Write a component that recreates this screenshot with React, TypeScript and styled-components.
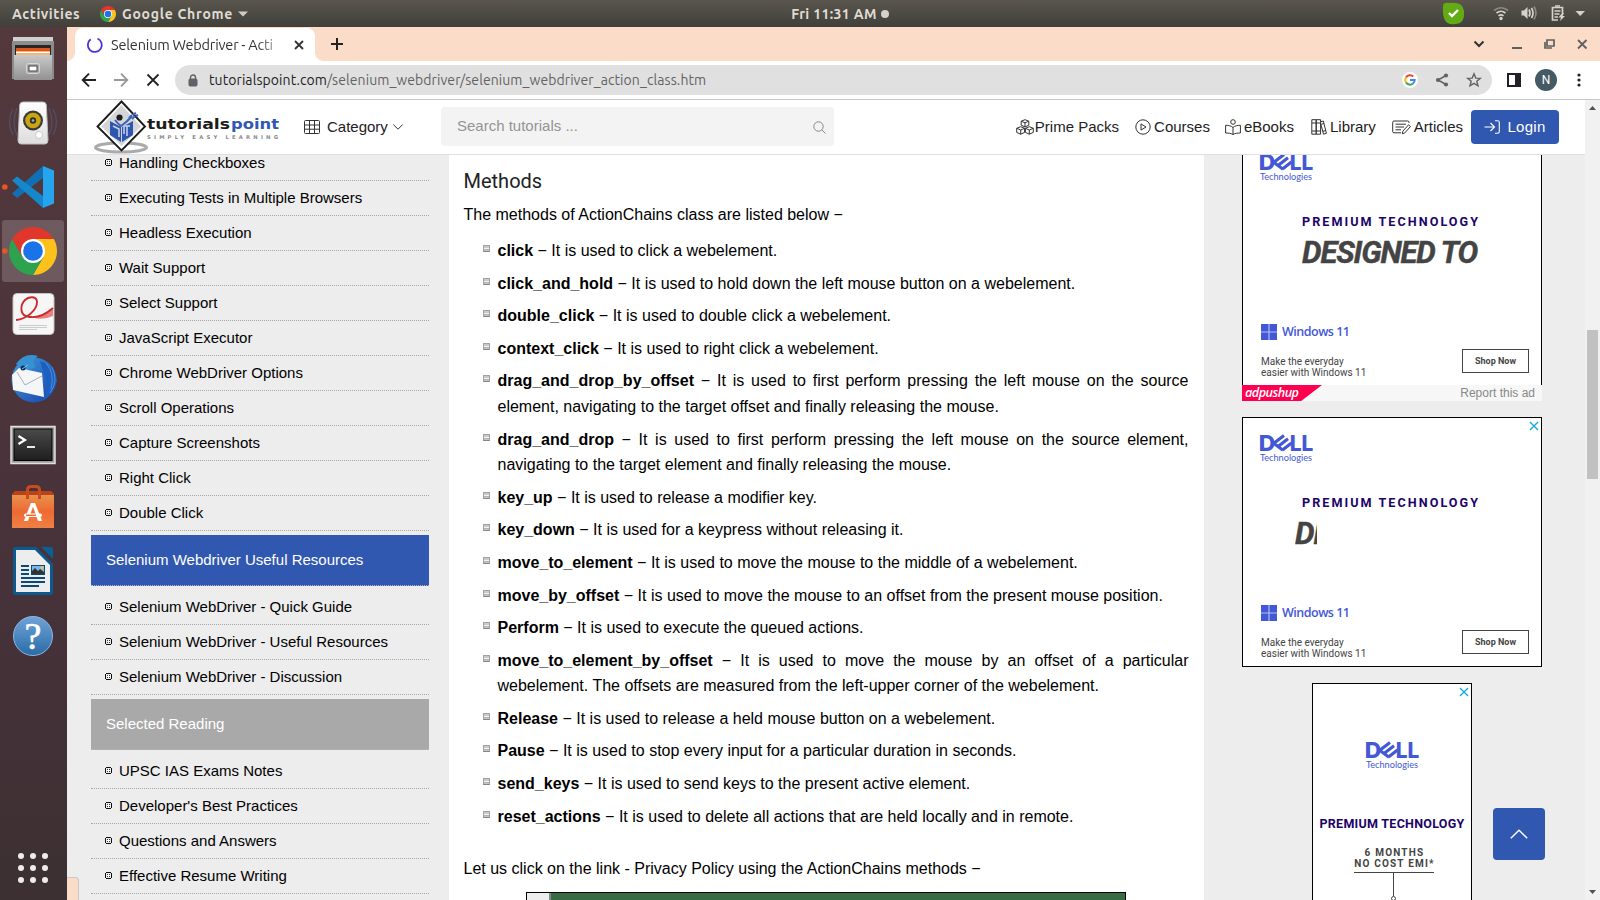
import React from 'react';
import styled, { createGlobalStyle, css } from 'styled-components';

const GlobalStyle = createGlobalStyle`
  *, *::before, *::after { box-sizing: border-box; }
  body { margin: 0; overflow: hidden; font-family: "Liberation Sans", Arial, sans-serif; color: #000; }
  svg { display: block; flex: none; overflow: visible; }
`;

const uiFont = '"Ubuntu", "Noto Sans", sans-serif';

const Desktop = styled.div`
  width: 1600px;
  height: 900px;
  display: flex;
  flex-direction: column;
  overflow: hidden;
`;

/* ---------- top bar ---------- */
const TopBar = styled.header`
  height: 27px;
  flex: none;
  display: grid;
  grid-template-columns: 1fr auto 1fr;
  align-items: center;
  background: linear-gradient(#5a564e, #403f3a);
  color: #dfdbd2;
  font: 600 14px/26px ${uiFont};
`;
const TopLeft = styled.div`
  display: flex;
  align-items: center;
  padding-left: 12px;
`;
const Activities = styled.span`
  width: 88px;
  letter-spacing: 0.6px;
`;
const AppName = styled.span`
  margin: 0 5px 0 6px;
  letter-spacing: 0.72px;
`;
const Clock = styled.div`
  display: flex;
  align-items: center;
  gap: 4px;
  padding-left: 80px;
  letter-spacing: 0.35px;
`;
const Dot = styled.i`
  width: 8px;
  height: 8px;
  border-radius: 50%;
  background: #d6d2ca;
`;
const Tray = styled.div`
  display: flex;
  justify-content: flex-end;
  align-items: center;
  padding-right: 13px;
`;

const Body = styled.div`
  flex: 1;
  display: flex;
  min-height: 0;
`;

/* ---------- dock ---------- */
const Dock = styled.nav`
  width: 67px;
  flex: none;
  display: flex;
  flex-direction: column;
  background: linear-gradient(#53393c, #4a333a 50%, #443138 75%, #3c3032);
`;
const Slot = styled.div<{ $active?: boolean }>`
  height: 64px;
  display: flex;
  ${p => p.$active && css`
    height: 62px;
    margin: 1px 3px 1px 2px;
    border-radius: 3px;
    background: rgba(255, 255, 255, 0.18);
    > svg { margin: -1px -3px -1px -2px; }
  `}
`;
const AppsGrid = styled.div`
  margin: auto 0 17px 18px;
  width: 30px;
  display: grid;
  grid-template-columns: repeat(3, 6px);
  gap: 6px;
  i { height: 6px; border-radius: 50%; background: #efecec; }
`;

/* ---------- browser ---------- */
const Browser = styled.div`
  flex: 1;
  min-width: 0;
  display: flex;
  flex-direction: column;
  position: relative;
  background: #fff;
`;
const TabStrip = styled.div`
  height: 34px;
  flex: none;
  display: flex;
  align-items: stretch;
  padding-left: 8px;
  background: #fbdcc8;
`;
const Tab = styled.div`
  width: 240px;
  margin-top: 1px;
  display: flex;
  align-items: center;
  padding: 0 10px 0 12px;
  border-radius: 8px 8px 0 0;
  background: #fff;
  position: relative;
  &::before, &::after {
    content: '';
    position: absolute;
    bottom: 0;
    width: 8px;
    height: 8px;
  }
  &::before { left: -8px; background: radial-gradient(circle at 0 0, transparent 7.5px, #fff 8px); }
  &::after { right: -8px; background: radial-gradient(circle at 100% 0, transparent 7.5px, #fff 8px); }
`;
const TabTitle = styled.span`
  width: 176px;
  margin: 0 7px 0 8px;
  white-space: nowrap;
  font: 14.5px/30px ${uiFont};
  letter-spacing: -0.18px;
  word-spacing: -0.3px;
  color: #333;
  mask-image: linear-gradient(90deg, #000 146px, transparent 178px);
`;
const StripButtons = styled.div`
  flex: 1;
  display: flex;
  align-items: center;
  justify-content: space-between;
  padding: 0 12px 0 15px;
`;
const WindowButtons = styled.div`
  display: flex;
  align-items: center;
`;
const Toolbar = styled.div`
  height: 39px;
  flex: none;
  display: flex;
  align-items: center;
  padding-left: 14px;
  border-bottom: 1px solid #c8c8c8;
  background: #fff;
`;
const NavButtons = styled.div`
  width: 94px;
  display: flex;
  gap: 16px;
`;
const Omnibox = styled.div`
  width: 1317px;
  height: 30px;
  border-radius: 15px;
  display: flex;
  align-items: center;
  padding: 0 10px 0 13px;
  background: #e0e0e0;
  font: 14px/28px ${uiFont};
  color: #636363;
`;
const Url = styled.span`
  flex: 1;
  margin-left: 11px;
  letter-spacing: 0.082px;
  b { font-weight: 400; color: #202124; }
`;
const OmniActions = styled.div`
  display: flex;
  align-items: center;
  gap: 16px;
`;
const PanelButton = styled.span`
  margin-left: 15px;
`;
const Avatar = styled.span`
  width: 22px;
  height: 22px;
  margin: 0 20px 0 14px;
  border-radius: 50%;
  background: #455a64;
  color: #fff;
  font: 12px/22px Roboto, sans-serif;
  text-align: center;
`;

/* ---------- page ---------- */
const Page = styled.div`
  flex: 1;
  min-height: 0;
  display: flex;
`;
const Site = styled.div`
  width: 1518px;
  display: flex;
  flex-direction: column;
  background: #ededed;
`;
const SiteHeader = styled.div`
  height: 55px;
  flex: none;
  display: flex;
  align-items: center;
  border-bottom: 1px solid #e0e0e0;
  background: #fff;
  font-size: 15px;
  line-height: 17px;
  color: #222;
`;
const LogoBox = styled.div`
  width: 237px;
  padding-left: 26px;
`;
const Label = styled.span`
  padding-bottom: 2px;
`;
const Category = styled.div`
  width: 137px;
  display: flex;
  align-items: center;
  ${Label} { margin: 0 5px 0 7px; }
`;
const Search = styled.div`
  width: 393px;
  height: 39px;
  margin-top: -1px;
  display: flex;
  align-items: center;
  justify-content: space-between;
  padding: 0 8px 0 16px;
  border-radius: 4px;
  background: #f3f3f3;
  color: #949494;
  svg { margin-top: 2px; }
`;
const Links = styled.div`
  flex: 1;
  display: flex;
  align-items: center;
  justify-content: flex-end;
  padding-right: 26px;
`;
const NavLink = styled.a<{ $gap: number; $after: number }>`
  display: flex;
  align-items: center;
  gap: ${p => p.$gap}px;
  margin-right: ${p => p.$after}px;
  white-space: nowrap;
`;
const Login = styled.a`
  width: 88px;
  height: 34px;
  display: flex;
  align-items: center;
  justify-content: center;
  gap: 7px;
  border-radius: 4px;
  background: #3158b1;
  color: #fff;
  letter-spacing: 0.3px;
`;
const Columns = styled.div`
  flex: 1;
  min-height: 0;
  display: flex;
  overflow: hidden;
`;
const Sidebar = styled.aside`
  width: 382px;
  flex: none;
  padding: 0 20px 0 24px;
`;
const Menu = styled.ul`
  list-style: none;
  margin: 0 0 4px;
  padding: 0;
`;
const SideMenu = styled.div`
  margin-top: -9px;
`;
const MenuItem = styled.li`
  height: 35px;
  display: flex;
  align-items: center;
  gap: 7px;
  padding: 0 0 2px 14px;
  border-bottom: 1px dotted #a8a8a8;
  font-size: 15px;
`;
const MenuHeading = styled.div<{ $bg: string }>`
  height: 51px;
  margin-bottom: 4px;
  padding-left: 15px;
  border-bottom: 1px dotted #b5b5b5;
  background: ${p => p.$bg};
  color: #fff;
  font-size: 15px;
  line-height: 50px;
`;
const MarkHolder = styled.i`
  padding-top: 1px;
`;
const Article = styled.main`
  width: 755px;
  flex: none;
  padding: 10px 15.5px 0 14.5px;
  background: #fff;
  font-size: 16px;
  line-height: 25.6px;
  text-align: justify;
`;
const Title = styled.h2`
  margin: 0;
  font: 400 20px/32px Roboto, sans-serif;
  color: #222;
`;
const Para = styled.p`
  margin: 5px 0 10.4px;
`;
const Methods = styled.ul`
  list-style: none;
  margin: 0 0 26.8px;
  padding: 0 0 0 34px;
`;
const Method = styled.li`
  margin-bottom: 7px;
  position: relative;
  &::before {
    content: '';
    position: absolute;
    left: -15px;
    top: 7px;
    width: 7px;
    height: 7px;
    border: 1px solid #a2a2a2;
    border-bottom-color: #858585;
    background: linear-gradient(#c9c9c9 2px, #f4f4f4 2px, #f4f4f4 3px, #a8a8a8 3px, #d0d0d0);
  }
`;
const Shot = styled.div`
  width: 600px;
  height: 60px;
  margin: 10.6px 0 0 62.5px;
  border: 1px solid #000;
  background: linear-gradient(90deg, #eee 22px, #888 22px, #888 24px, #376b43 24px);
`;
const AdColumn = styled.aside`
  flex: 1;
  display: flex;
  flex-direction: column;
  align-items: center;
`;
const AdGroup = styled.div`
  width: 300px;
  margin: -19px 5px 16px 0;
`;
const Ad = styled.div<{ $cut?: boolean }>`
  position: relative;
  width: 300px;
  height: ${p => (p.$cut ? 249 : 250)}px;
  margin-right: 5px;
  padding: 16px 12px 0 17px;
  border: 1px solid #000;
  ${p => p.$cut && 'border-bottom: 0;'}
  background: #fff;
  flex: none;
  font-family: Roboto, sans-serif;
`;
const CloseMark = styled.span`
  position: absolute;
  top: 2.5px;
  right: 2.5px;
`;
const AdTag = styled.div`
  margin: 29px 0 0 42px;
  font-size: 12.6px;
  font-weight: 700;
  line-height: 16px;
  letter-spacing: 2.05px;
  white-space: nowrap;
  color: #200368;
`;
const AdSlogan = styled.div<{ $w?: number; $x?: number }>`
  width: ${p => p.$w ?? 190}px;
  height: 36px;
  margin: 5px 0 0 ${p => p.$x ?? 42}px;
  overflow: hidden;
  white-space: nowrap;
  font-size: 31px;
  line-height: 36px;
  font-weight: 700;
  font-style: italic;
  letter-spacing: -1.15px;
  -webkit-text-stroke: 0.4px #444;
  color: #444;
`;
const Windows = styled.div`
  display: flex;
  align-items: center;
  gap: 5px;
  margin: 47px 0 0 1px;
  height: 28px;
  font: 600 12.5px/28px "Open Sans", sans-serif;
  letter-spacing: -0.5px;
  color: #4358d6;
`;
const AdBottom = styled.div`
  display: flex;
  justify-content: space-between;
  padding: 3px 0 0 1px;
  font-size: 10px;
  line-height: 11px;
  color: #444;
  p { margin: 7px 0 0; }
`;
const Shop = styled.span`
  width: 67px;
  height: 24px;
  border: 1px solid #444;
  font-size: 9px;
  font-weight: 700;
  line-height: 22px;
  text-align: center;
`;
const PushBar = styled.div`
  height: 16px;
  display: flex;
  justify-content: space-between;
  padding-right: 7px;
  background: #f7f7f7;
  color: #888;
  font-size: 12px;
  line-height: 16px;
`;
const PushLogo = styled.span`
  width: 80px;
  padding-left: 3px;
  background: #ff0050;
  clip-path: polygon(0 0, 100% 0, 74% 100%, 0 100%);
  color: #fff;
  font: italic 600 12.6px/15px "Open Sans", sans-serif;
  letter-spacing: -0.5px;
`;
const TallAd = styled.div`
  position: relative;
  width: 160px;
  height: 260px;
  margin: 16px 5px 0 0;
  padding-top: 57px;
  display: flex;
  flex-direction: column;
  align-items: center;
  flex: none;
  border: 1px solid #000;
  background: #fff;
  font-family: Roboto, sans-serif;
`;
const TallTag = styled.div`
  margin-top: 43px;
  font-size: 12.5px;
  font-weight: 700;
  line-height: 16px;
  letter-spacing: 0.27px;
  white-space: nowrap;
  color: #200368;
`;
const Offer = styled.div`
  display: flex;
  flex-direction: column;
  align-items: center;
  margin: 15px 0 3px 5px;
  font-size: 10px;
  font-weight: 700;
  line-height: 11px;
  letter-spacing: 1.2px;
  text-align: center;
  color: #444;
  > svg { margin-top: 3px; }
`;
const Scrollbar = styled.div`
  width: 15px;
  display: flex;
  flex-direction: column;
  align-items: center;
  background: #f1f1f1;
  padding: 6px 0 6px;
`;
const Thumb = styled.div`
  width: 11px;
  height: 149px;
  margin: 220px 0 auto;
  background: #c1c1c1;
`;
const TopButton = styled.button`
  position: absolute;
  left: 1426px;
  top: 781px;
  width: 52px;
  height: 52px;
  padding: 0;
  display: flex;
  align-items: center;
  justify-content: center;
  border: 0;
  border-radius: 4px;
  background: #3158b1;
`;
const StatusBubble = styled.div`
  position: absolute;
  left: 0;
  bottom: 0;
  width: 12px;
  height: 23px;
  border: 1px solid #c9c9c9;
  border-width: 1px 1px 0 0;
  border-top-right-radius: 4px;
  background: #fbdcc8;
`;

/* ---------- drawings ---------- */
const ChromeMark = ({ size }: { size: number }) => {
  const wedge = 'M20.78-12A24 24 0 0 0-20.78-12L-10.39 6L0-12Z';
  return (
    <svg width={size} height={size} viewBox="-24 -24 48 48">
      <path d={wedge} fill="#fcc21b" transform="rotate(120)" />
      <path d={wedge} fill="#2fa24f" transform="rotate(240)" />
      <path d={wedge} fill="#e0362c" />
      <circle r="12" fill="#fff" />
      <circle r="9.8" fill="#1a73e8" />
    </svg>
  );
};

const DockSvg = ({ children, running }: { children: React.ReactNode; running?: boolean }) => (
  <svg width="67" height="64" viewBox="0 0 67 64">
    <defs>
      <linearGradient id="steel" x1="0" y1="0" x2="0" y2="1"><stop offset="0" stopColor="#c9c9c9" /><stop offset="1" stopColor="#929292" /></linearGradient>
      <linearGradient id="paper" x1="0" y1="0" x2="0" y2="1"><stop offset="0" stopColor="#fff" /><stop offset="1" stopColor="#dcdcdc" /></linearGradient>
      <linearGradient id="night" x1="0" y1="0" x2="0" y2="1"><stop offset="0" stopColor="#4a4a4a" /><stop offset="1" stopColor="#1e1e1e" /></linearGradient>
      <linearGradient id="bag" x1="0" y1="0" x2="0" y2="1"><stop offset="0" stopColor="#e8914e" /><stop offset=".5" stopColor="#ee6a32" /><stop offset="1" stopColor="#f08045" /></linearGradient>
      <linearGradient id="help" x1="0" y1="0" x2="0" y2="1"><stop offset="0" stopColor="#6fa3d8" /><stop offset="1" stopColor="#2a6ba6" /></linearGradient>
      <linearGradient id="bird" x1="0" y1="0" x2="1" y2="1"><stop offset="0" stopColor="#3f9fe0" /><stop offset="1" stopColor="#1a3fa8" /></linearGradient>
    </defs>
    {running && <circle cx="4.8" cy="32" r="2.8" fill="#e95420" />}
    {children}
  </svg>
);

const DellLogo = () => (
  <svg width="52" height="32" viewBox="0 0 52 32" fill="#4358d6">
    <g fontFamily="Inter, sans-serif" fontWeight="800" fontSize="21.5">
      <text x="-1.2" y="16.800" textLength="16.500" lengthAdjust="spacingAndGlyphs">D</text>
      <text x="29.8" y="16.800" textLength="23.500" lengthAdjust="spacingAndGlyphs">LL</text>
    </g>
    <path d="M13.500 9.500L24 1.500M18 12.500L28 4.800M22.500 16L31.500 9M13 8.800L23 16.200" fill="none" stroke="#4358d6" strokeWidth="3.100" />
    <text x="0" y="27" fontFamily="Lato, sans-serif" fontSize="10.300" textLength="52" lengthAdjust="spacingAndGlyphs">Technologies</text>
  </svg>
);

const Cross = ({ size, color, width }: { size: number; color: string; width: number }) => (
  <svg width={size} height={size} viewBox={`0 0 ${size} ${size}`}>
    <path d={`M1 1L${size - 1} ${size - 1}M${size - 1} 1L1 ${size - 1}`} stroke={color} strokeWidth={width} />
  </svg>
);

const Logo = () => (
  <svg width="190" height="54" viewBox="0 0 190 54">
    <ellipse cx="28" cy="47.500" rx="25.500" ry="4.500" fill="#fff" stroke="#aaa" strokeWidth="3" />
    <path d="M28.500 1.500L52 26.500L28.500 50.500L4.500 26.500Z" fill="#fff" stroke="#1c1c1c" strokeWidth="1.900" />
    <path d="M28.500 5L48 26.500L28.500 46L8.500 26.500Z" fill="#d3d5d8" />
    <path d="M17 21L28 27V42L17 35ZM40 21L29 27V42L40 35Z" fill="#2f56ad" />
    <path d="M20 26L26 29V37M37 26H31V34M34 26V36" fill="none" stroke="#c9d3ea" strokeWidth="1.500" />
    <path d="M22 20Q25 24 28 26Q34 22 39 16" fill="none" stroke="#3c62b8" strokeWidth="2" />
    <circle cx="26.500" cy="17.500" r="3.100" fill="#1c1c1c" />
    <path d="M36 18l3-3M39 19l3-3M40 14.500l3-1.500M43 16l2-1" stroke="#3c62b8" strokeWidth="2" />
    <g fontFamily='"DejaVu Sans", sans-serif' fontWeight="700" fontSize="14.500">
      <text x="54" y="29" fill="#1c1c1c" textLength="83" lengthAdjust="spacingAndGlyphs">tutorials</text>
      <text x="138" y="29" fill="#3158b1" textLength="48" lengthAdjust="spacingAndGlyphs">point</text>
    </g>
    <text x="54" y="38.500" fontFamily='"DejaVu Sans", sans-serif' fontWeight="700" fontSize="5.300" fill="#8a8a8a" textLength="131">SIMPLY EASY LEARNING</text>
  </svg>
);

const MenuMark = () => (
  <MarkHolder>
    <svg width="7" height="7" viewBox="0 0 7 7">
      <path d="M1 0H6V1H7V6H6V7H1V6H0V1H1ZM1 1V6H6V1Z" fill="#111" fillRule="evenodd" />
      <path d="M2 2H5V5H2Z" fill="#fff" /><path d="M2 2h1v1h-1zM4 2h1v1h-1zM2 4h1v1h-1zM4 4h1v1h-1z" fill="#333" />
    </svg>
  </MarkHolder>
);

const line = { fill: 'none', stroke: '#333', strokeWidth: 1 } as const;
const BoxesIcon = () => (
  <svg width="18" height="16" viewBox="0 0 18 16" {...line}>
    <path d="M9 .7L12.800 2.200V6.200L9 7.900L5.200 6.200V2.200ZM5.200 2.200L9 3.800L12.800 2.200M9 3.800V7.900" />
    <path d="M4.700 7.700L8.600 9.300V13.400L4.700 15.200L.7 13.400V9.300ZM.7 9.300L4.700 11L8.600 9.300M4.700 11V15.200" />
    <path d="M13.300 7.700L17.300 9.300V13.400L13.300 15.200L9.400 13.400V9.300ZM9.400 9.300L13.300 11L17.300 9.300M13.300 11V15.200" />
  </svg>
);
const PlayIcon = () => (
  <svg width="16" height="16" viewBox="0 0 16 16" {...line}><circle cx="8" cy="8" r="7.200" /><path d="M6 4.900L11 8L6 11.100Z" /></svg>
);
const ReaderIcon = () => (
  <svg width="16" height="16" viewBox="0 0 16 16" {...line}>
    <circle cx="8" cy="3" r="2.300" /><path d="M8 8.500C6 6.800 3.500 6.300.6 6.300V14C3.500 14 6 14.300 8 15.500C10 14.300 12.500 14 15.400 14V6.300C12.500 6.300 10 6.800 8 8.500V15.500" />
  </svg>
);
const BooksIcon = () => (
  <svg width="16" height="16" viewBox="0 0 16 16" {...line}>
    <path d="M.8.7H5.200V15.200H.8ZM5.200.7H9.600V15.200H5.200ZM.8 4H9.600M.8 12H9.600M9.800 2.700L12.300 2L15.400 14.300L12.500 15.200L9.700 4.500M10.400 5.200L13 4.500M12 12.300L14.800 11.500" />
  </svg>
);
const ArticleIcon = () => (
  <svg width="19" height="15" viewBox="0 0 19 15" {...line}>
    <path d="M17 3V2.300Q17 1 15.700 1H2Q.7 1 .7 2.300V11.500Q.7 12.800 2 12.800H9M3.500 4.200H14M3.500 7H12M3.500 9.800H9" />
    <path d="M16.500 4.800L18.500 6.500L12.700 13L10.300 13.800L10.800 11.300Z" />
  </svg>
);

/* ---------- content ---------- */
const chapters = [
  'Handling Checkboxes', 'Executing Tests in Multiple Browsers', 'Headless Execution', 'Wait Support',
  'Select Support', 'JavaScript Executor', 'Chrome WebDriver Options', 'Scroll Operations',
  'Capture Screenshots', 'Right Click', 'Double Click',
];
const resources = ['Selenium WebDriver - Quick Guide', 'Selenium WebDriver - Useful Resources', 'Selenium WebDriver - Discussion'];
const reading = ['UPSC IAS Exams Notes', "Developer's Best Practices", 'Questions and Answers', 'Effective Resume Writing'];

const methods: [string, string][] = [
  ['click', 'It is used to click a webelement.'],
  ['click_and_hold', 'It is used to hold down the left mouse button on a webelement.'],
  ['double_click', 'It is used to double click a webelement.'],
  ['context_click', 'It is used to right click a webelement.'],
  ['drag_and_drop_by_offset', 'It is used to first perform pressing the left mouse on the source element, navigating to the target offset and finally releasing the mouse.'],
  ['drag_and_drop', 'It is used to first perform pressing the left mouse on the source element, navigating to the target element and finally releasing the mouse.'],
  ['key_up', 'It is used to release a modifier key.'],
  ['key_down', 'It is used for a keypress without releasing it.'],
  ['move_to_element', 'It is used to move the mouse to the middle of a webelement.'],
  ['move_by_offset', 'It is used to move the mouse to an offset from the present mouse position.'],
  ['Perform', 'It is used to execute the queued actions.'],
  ['move_to_element_by_offset', 'It is used to move the mouse by an offset of a particular webelement. The offsets are measured from the left-upper corner of the webelement.'],
  ['Release', 'It is used to release a held mouse button on a webelement.'],
  ['Pause', 'It is used to stop every input for a particular duration in seconds.'],
  ['send_keys', 'It is used to send keys to the present active element.'],
  ['reset_actions', 'It is used to delete all actions that are held locally and in remote.'],
];

const MenuList = ({ items }: { items: string[] }) => (
  <Menu>{items.map(t => <MenuItem key={t}><MenuMark />{t}</MenuItem>)}</Menu>
);

const DellAd = ({ cut, partial }: { cut?: boolean; partial?: boolean }) => (
  <Ad $cut={cut}>
    {!cut && <CloseMark><Cross size={10} color="#17aadb" width={1.4} /></CloseMark>}
    <DellLogo />
    <AdTag>PREMIUM TECHNOLOGY</AdTag>
    {partial ? <AdSlogan $w={22} $x={35}>DE</AdSlogan> : <AdSlogan>DESIGNED TO</AdSlogan>}
    <Windows>
      <svg width="16" height="16" viewBox="0 0 16 16"><path d="M0 0H16V16H0Z" fill="#4358d6" /><path d="M8 0V16M0 8H16" stroke="#b4bdf0" strokeWidth="1.200" /></svg>
      Windows 11
    </Windows>
    <AdBottom>
      <p>Make the everyday<br />easier with Windows 11</p>
      <Shop>Shop Now</Shop>
    </AdBottom>
  </Ad>
);

const DockBar = () => (
  <Dock>
    <Slot><DockSvg>
      <path d="M13 10H53V20H13Z" fill="#d0d0d0" /><path d="M12 14H54V52H12Z" fill="#8c8c8c" /><path d="M15 18H51V29H15Z" fill="#2a2623" />
      <path d="M16 21H50V29H16Z" fill="#d9561e" /><path d="M16 24H50V29H16Z" fill="#f3b47a" /><path d="M16 25.500H50" stroke="#fff" strokeWidth="1" />
      <path d="M14 28H52V53H14Z" fill="url(#steel)" /><rect x="26.500" y="36.500" width="13" height="10" rx="2" fill="#aaa" stroke="#d8d8d8" /><rect x="29" y="39" width="8" height="5" fill="#fff" stroke="#444" />
    </DockSvg></Slot>
    <Slot><DockSvg>
      <g fill="none" stroke="#53597c" strokeWidth="1.500" opacity=".6"><path d="M13 18Q6 31 13 44M17 17Q11 32 17 44M53 18Q60 31 53 44M49 17Q55 32 49 44" /></g>
      <path d="M23 11H43Q46 11 46.300 14L48 49Q48 53 45 53H21Q18 53 18 49L19.700 14Q20 11 23 11Z" fill="url(#paper)" stroke="#bdbdbd" />
      <circle cx="33" cy="29.500" r="10" fill="#3a3a3a" /><circle cx="33" cy="29.500" r="7.800" fill="#c9a60e" /><circle cx="33" cy="29.500" r="3.200" fill="#333" /><circle cx="33" cy="29.500" r="1.300" fill="#aaa" />
      <circle cx="39" cy="44" r="3.500" fill="#fff" stroke="#ccc" />
    </DockSvg></Slot>
    <Slot><DockSvg running>
      <path d="M12 38.500L17 43L43 23V11Z" fill="#1070b3" /><path d="M12 25.500L17 21.500L43 41V53Z" fill="#1687cb" />
      <path d="M43 11L54 15.500V48.500L43 53Z" fill="#26a4ee" />
    </DockSvg></Slot>
    <Slot $active><DockSvg running>
      <svg x="9" y="8" width="48" height="48"><ChromeMark size={48} /></svg>
    </DockSvg></Slot>
    <Slot><DockSvg>
      <rect x="13" y="10.500" width="41" height="41" rx="4" fill="#f6f6f6" stroke="#c4c4c4" />
      <path d="M30 34Q42 34 53 25V33Q42 38 30 34" fill="#e78080" />
      <path d="M16 37C27 36 37 27 37 19C37 13 29 13 25 17C20 22 20 31 26 33C35 36 45 32 53 25" fill="none" stroke="#cc2a2d" strokeWidth="1.900" />
      <path d="M19 42.500H47M19 44.500H47M19 46.500H37" stroke="#ccc" strokeWidth="1" />
    </DockSvg></Slot>
    <Slot><DockSvg>
      <circle cx="34" cy="33" r="22.500" fill="url(#bird)" /><path d="M16 17Q24 5 38 9Q30 14 36 20L24 24Z" fill="#3692d2" />
      <path d="M40 14Q54 18 57 34Q52 48 42 54Q50 42 45 30Z" fill="#1d5fc0" /><path d="M46 16Q55 26 51 42M52 20Q59 34 50 46" fill="none" stroke="#4c8fdc" strokeWidth="1" />
      <path d="M19 21L42 26L44 50L13 43L12 28Z" fill="#f4f6f8" /><path d="M17 25L25 38L42 29" fill="none" stroke="#a8b0b8" strokeWidth="1" /><circle cx="23" cy="21" r="2.500" fill="#142e55" /><path d="M22 22L28 18" stroke="#7dc4f0" />
    </DockSvg></Slot>
    <Slot><DockSvg>
      <rect x="11" y="15.500" width="44" height="37" fill="#9c9c9c" stroke="#e0e0e0" strokeWidth="1.500" /><rect x="14" y="18" width="38" height="31.500" fill="url(#night)" stroke="#000" />
      <path d="M18.500 25L25 29L18.500 33" fill="none" stroke="#fff" strokeWidth="2.200" /><path d="M27 36H35" stroke="#fff" strokeWidth="1.800" />
    </DockSvg></Slot>
    <Slot><DockSvg>
      <path d="M12 19L15 16H51L54 19V23H12Z" fill="#b8421a" /><path d="M12 20H54V53H12Z" fill="url(#bag)" />
      <path d="M27.500 24V15Q27.500 11.500 31 11.500H36Q39.500 11.500 39.500 15V24" fill="none" stroke="#c84b1c" strokeWidth="3" />
      <text x="33" y="46" textAnchor="middle" fontFamily="Lato, sans-serif" fontWeight="900" fontSize="25" fill="#fff">A</text>
      <rect x="24" y="38.500" width="18" height="3.600" rx="1.800" fill="#fff" /><path d="M26 40.300H36" stroke="#ee6a32" strokeWidth="1.500" />
    </DockSvg></Slot>
    <Slot><DockSvg>
      <path d="M15 8H36L53 25V54Q53 56 51 56H15Q13 56 13 54V10Q13 8 15 8Z" fill="#0a5a8f" /><path d="M41 8H51Q53 8 53 10V20Z" fill="#0b5f99" /><path d="M16 11H35L50 26V53H16Z" fill="#ededed" />
      <path d="M21 27H29M21 31H29M21 35H29M21 39H45M21 43H45M21 47H39" stroke="#0b4a75" strokeWidth="2" /><rect x="31.500" y="26.500" width="13" height="9" fill="#78b7e8" stroke="#0b4a75" /><path d="M32 35V32L35 29L38 32L40 30L44 33V35Z" fill="#333" /><circle cx="42" cy="28.500" r="1.500" fill="#f0c24a" />
    </DockSvg></Slot>
    <Slot><DockSvg>
      <circle cx="33" cy="33" r="19.500" fill="url(#help)" stroke="#8ab7e2" strokeWidth="1" />
      <text x="33" y="45.500" textAnchor="middle" fontFamily='"Liberation Serif", serif' fontSize="38" fill="#fff" stroke="#fff" strokeWidth=".6">?</text>
    </DockSvg></Slot>
    <AppsGrid>{Array.from({ length: 9 }, (_, i) => <i key={i} />)}</AppsGrid>
  </Dock>
);

export default function App() {
  return (
    <Desktop>
      <GlobalStyle />
      <TopBar>
        <TopLeft>
          <Activities>Activities</Activities>
          <ChromeMark size={16} />
          <AppName>Google Chrome</AppName>
          <svg width="10" height="6" viewBox="0 0 10 6"><path d="M0 .5H10L5 5.500Z" fill="#cfccc4" /></svg>
        </TopLeft>
        <Clock>Fri 11:31 AM<Dot /></Clock>
        <Tray>
          <svg width="147" height="27" viewBox="1440 0 147 27">
            <path d="M1443 8Q1442 2 1449 3Q1463 1 1464 11Q1465 24 1455 24Q1442 26 1443 8Z" fill="#62ab13" />
            <path d="M1449 13L1452 16L1458 10" fill="none" stroke="#fff" strokeWidth="2.400" />
            <g fill="none" stroke="#d6d2ca" strokeWidth="1.700">
              <path d="M1494 10.500Q1501 5 1508 10.500" opacity=".45" /><path d="M1496.500 13Q1501 9.500 1505.500 13" /><path d="M1498.500 15.800Q1501 13.800 1503.500 15.800" />
              <path d="M1529 9.500Q1531 13 1529 16.500" /><path d="M1531.500 8Q1534.500 13 1531.500 18" /><path d="M1534 6.500Q1538 13 1534 19.500" opacity=".45" />
              <path d="M1558 20H1552.500V7.500H1562.500V13" /><path d="M1555 6H1560M1554.500 11H1560.500M1554.500 14H1559.500M1554.500 17H1558" strokeWidth="1.500" />
            </g>
            <circle cx="1501" cy="18.500" r="1.700" fill="#d6d2ca" />
            <path d="M1521.500 10.500H1524L1527.500 7V19L1524 15.500H1521.500ZM1562 13L1558.500 17.500H1561L1560 21L1565 16H1562.500L1564 13Z" fill="#d6d2ca" />
            <path d="M1575.500 11H1585L1580.200 16Z" fill="#d6d2ca" />
          </svg>
        </Tray>
      </TopBar>
      <Body>
        <DockBar />
        <Browser>
          <TabStrip>
            <Tab>
              <svg width="16" height="16" viewBox="0 0 16 16"><path d="M3.700 2.300A7 7 0 1 0 10.500 1.500" fill="none" stroke="#4b32e0" strokeWidth="1.800" /></svg>
              <TabTitle>Selenium Webdriver - Acti</TabTitle>
              <Cross size={10} color="#333" width={1.8} />
            </Tab>
            <StripButtons>
              <svg width="14" height="14" viewBox="0 0 14 14"><path d="M7 1V13M1 7H13" stroke="#222" strokeWidth="2" /></svg>
              <WindowButtons>
                <svg width="115" height="14" viewBox="1473 37 115 14" fill="none" stroke="#5f5f5f" strokeWidth="2">
                  <path d="M1474.500 41.500L1479 46L1483.500 41.500" stroke="#333" /><path d="M1512 48H1522" />
                  <path d="M1547 40H1554V46H1547ZM1545 42V48H1552" strokeWidth="1.700" /><path d="M1578 40L1586.500 48.500M1586.500 40L1578 48.500" strokeWidth="1.800" />
                </svg>
              </WindowButtons>
            </StripButtons>
          </TabStrip>
          <Toolbar>
            <NavButtons>
              <svg width="16" height="16" viewBox="0 0 16 16"><path d="M15 8H2M8 1.700L1.700 8L8 14.300" fill="none" stroke="#222" strokeWidth="1.900" /></svg>
              <svg width="16" height="16" viewBox="0 0 16 16"><path d="M1 8H14M8 1.700L14.300 8L8 14.300" fill="none" stroke="#999" strokeWidth="1.800" /></svg>
              <svg width="16" height="16" viewBox="0 0 16 16"><path d="M2.500 2.500L13.500 13.500M13.500 2.500L2.500 13.500" stroke="#222" strokeWidth="1.800" /></svg>
            </NavButtons>
            <Omnibox>
              <svg width="10" height="13" viewBox="0 0 10 13"><rect x="1" y="5" width="8" height="7" rx="1" fill="#5f6368" stroke="#5f6368" /><path d="M2.500 5V3.500A2.500 2.500 0 0 1 7.500 3.500V5" fill="none" stroke="#5f6368" strokeWidth="1.400" /></svg>
              <Url><b>tutorialspoint.com</b>/selenium_webdriver/selenium_webdriver_action_class.htm</Url>
              <OmniActions>
                <svg width="16" height="16" viewBox="0 0 16 16" fill="none" strokeWidth="2">
                  <circle cx="8" cy="8" r="8" fill="#fff" stroke="none" /><path d="M11.300 4.500A4.700 4.700 0 0 0 4 5.500" stroke="#ea4335" /><path d="M4 5.500A4.700 4.700 0 0 0 4 10.500" stroke="#fbbc05" /><path d="M4 10.500A4.700 4.700 0 0 0 11 11.500" stroke="#34a853" /><path d="M8 8H12.700Q12.600 10.200 11 11.500" stroke="#4285f4" />
                </svg>
                <svg width="16" height="16" viewBox="0 0 16 16"><path d="M12 3.500L4 8L12 12.500" fill="none" stroke="#5f6368" strokeWidth="1.500" /><g fill="#5f6368"><circle cx="12" cy="3.500" r="2.100" /><circle cx="4" cy="8" r="2.100" /><circle cx="12" cy="12.500" r="2.100" /></g></svg>
                <svg width="16" height="16" viewBox="0 0 16 16"><path d="M8 1.800L9.800 6.100L14.300 6.400L10.800 9.300L12 13.800L8 11.300L4 13.800L5.200 9.300L1.700 6.400L6.200 6.100Z" fill="none" stroke="#5f6368" strokeWidth="1.400" /></svg>
              </OmniActions>
            </Omnibox>
            <PanelButton>
              <svg width="14" height="14" viewBox="0 0 14 14"><path d="M0 0H14V14H0ZM2 2V12H8V2Z" fill="#202124" fillRule="evenodd" /></svg>
            </PanelButton>
            <Avatar>N</Avatar>
            <svg width="4" height="14" viewBox="0 0 4 14" fill="#222"><circle cx="2" cy="2" r="1.600" /><circle cx="2" cy="7" r="1.600" /><circle cx="2" cy="12" r="1.600" /></svg>
          </Toolbar>
          <Page>
            <Site>
              <SiteHeader>
                <LogoBox><Logo /></LogoBox>
                <Category>
                  <svg width="16" height="14" viewBox="0 0 16 14" {...line}><rect x=".5" y=".5" width="15" height="13" rx="1" /><path d="M.5 5H15.500M.5 9.200H15.500M5.500.5V13.500M10.500.5V13.500" /></svg>
                  <Label>Category</Label>
                  <svg width="10" height="6" viewBox="0 0 10 6" {...line}><path d="M.3.5L5 5.200L9.700.5" /></svg>
                </Category>
                <Search>
                  <Label>Search tutorials ...</Label>
                  <svg width="13" height="13" viewBox="0 0 13 13" fill="none" stroke="#888"><circle cx="5.500" cy="5.500" r="4.700" /><path d="M9 9L12.500 12.500" /></svg>
                </Search>
                <Links>
                  <NavLink $gap={1} $after={16}><BoxesIcon /><Label>Prime Packs</Label></NavLink>
                  <NavLink $gap={3} $after={15}><PlayIcon /><Label>Courses</Label></NavLink>
                  <NavLink $gap={3} $after={17}><ReaderIcon /><Label>eBooks</Label></NavLink>
                  <NavLink $gap={3} $after={16}><BooksIcon /><Label>Library</Label></NavLink>
                  <NavLink $gap={3} $after={8}><ArticleIcon /><Label>Articles</Label></NavLink>
                  <Login>
                    <svg width="16" height="14" viewBox="0 0 16 14" fill="none" stroke="#fff" strokeWidth="1.100"><path d="M.5 7H10.500M6.500 3L10.500 7L6.500 11M11 .8H13.500Q15.300.8 15.300 2.500V11.500Q15.300 13.200 13.500 13.200H11" /></svg>
                    <Label>Login</Label>
                  </Login>
                </Links>
              </SiteHeader>
              <Columns>
                <Sidebar>
                  <SideMenu>
                    <MenuList items={chapters} />
                    <MenuHeading $bg="#3158b1">Selenium Webdriver Useful Resources</MenuHeading>
                    <MenuList items={resources} />
                    <MenuHeading $bg="#a9a9a9">Selected Reading</MenuHeading>
                    <MenuList items={reading} />
                  </SideMenu>
                </Sidebar>
                <Article>
                  <Title>Methods</Title>
                  <Para>The methods of ActionChains class are listed below −</Para>
                  <Methods>
                    {methods.map(([name, text]) => <Method key={name}><b>{name}</b> − {text}</Method>)}
                  </Methods>
                  <Para>Let us click on the link - Privacy Policy using the ActionChains methods −</Para>
                  <Shot />
                </Article>
                <AdColumn>
                  <AdGroup>
                    <DellAd cut />
                    <PushBar><PushLogo>adpushup</PushLogo>Report this ad</PushBar>
                  </AdGroup>
                  <DellAd partial />
                  <TallAd>
                    <CloseMark><Cross size={10} color="#17aadb" width={1.4} /></CloseMark>
                    <DellLogo />
                    <TallTag>PREMIUM TECHNOLOGY</TallTag>
                    <Offer>
                      <span>6 MONTHS</span>
                      <span>NO COST EMI*</span>
                      <svg width="80" height="30" viewBox="0 0 80 30" fill="none" stroke="#444"><path d="M0 .5H80M39.500 .5V24" /><circle cx="39.500" cy="26.500" r="2" /></svg>
                    </Offer>
                  </TallAd>
                </AdColumn>
              </Columns>
            </Site>
            <Scrollbar>
              <svg width="7" height="4" viewBox="0 0 7 4"><path d="M0 4H7L3.500 0Z" fill="#505050" /></svg>
              <Thumb />
              <svg width="7" height="4" viewBox="0 0 7 4"><path d="M0 0H7L3.500 4Z" fill="#505050" /></svg>
            </Scrollbar>
          </Page>
          <TopButton>
            <svg width="18" height="10" viewBox="0 0 18 10"><path d="M.8 9.200L9 1.200L17.200 9.200" fill="none" stroke="#fff" strokeWidth="1.400" /></svg>
          </TopButton>
          <StatusBubble />
        </Browser>
      </Body>
    </Desktop>
  );
}
